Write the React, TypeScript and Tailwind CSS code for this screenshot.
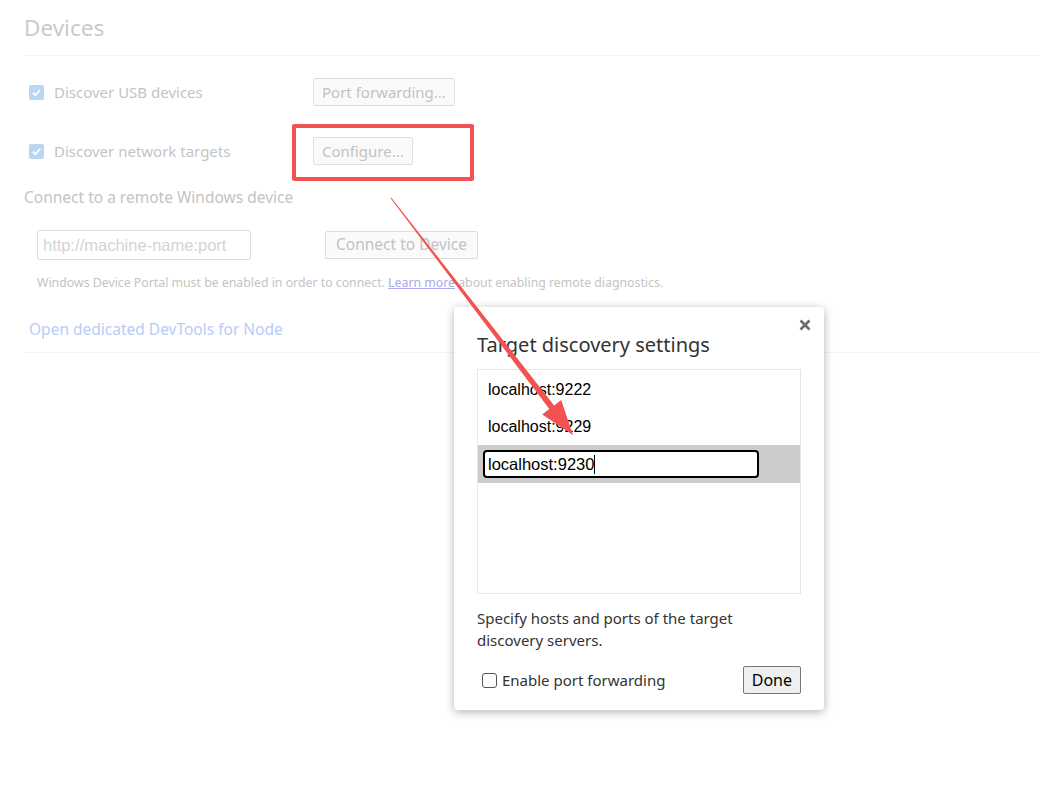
import React from "react";

const ui = { fontFamily: '"Noto Sans", "Open Sans", sans-serif' };
const arial = { fontFamily: '"Liberation Sans", Arial, sans-serif' };

const FadedCheck = () => (
  <span className="w-[15px] h-[15px] rounded-[2px] bg-[#b9d6f2] flex items-center justify-center">
    <svg width="11" height="11" viewBox="0 0 12 12">
      <path d="M2 6.2 L4.8 9 L10 3" stroke="#ffffff" strokeWidth="2" fill="none" />
    </svg>
  </span>
);

const FadedButton = ({ children, wide }: { children: React.ReactNode; wide?: boolean }) => (
  <button
    className={
      wide
        ? "h-[28px] px-[10px] border border-[#dedede] rounded-[2px] bg-[#fafafa] text-[#c2c2c2] text-[15.5px] leading-none"
        : "h-[28px] px-[8px] border border-[#dedede] rounded-[2px] bg-[#fafafa] text-[#c2c2c2] text-[15px] leading-none"
    }
  >
    {children}
  </button>
);

const App = () => {
  return (
    <div className="relative w-[1040px] h-[786px] bg-white overflow-hidden" style={ui}>
      {/* background page (dimmed) */}
      <div className="pl-[24px] pt-[13px]">
        <h1 className="text-[22.5px] leading-[30px] text-[#cacaca]">Devices</h1>
        <div className="mt-[12px] h-px bg-[#f4f4f4]" />

        <div className="flex items-center h-[28px] mt-[22px] pl-[5px]">
          <FadedCheck />
          <span className="ml-[10px] w-[259px] text-[15px] text-[#c4c4c4]">Discover USB devices</span>
          <FadedButton>Port forwarding...</FadedButton>
        </div>
        <div className="flex items-center h-[28px] mt-[31px] pl-[5px]">
          <FadedCheck />
          <span className="ml-[10px] w-[259px] text-[15px] text-[#c4c4c4]">Discover network targets</span>
          <FadedButton>Configure...</FadedButton>
        </div>

        <div className="mt-[22px] text-[15.5px] leading-[20px] text-[#c4c4c4]">Connect to a remote Windows device</div>

        <div className="flex items-center mt-[23px] pl-[13px]">
          <div
            className="w-[214px] h-[30px] border border-[#dcdcdc] rounded-[2px] flex items-center px-[5px] text-[16.5px] text-[#d4d4d4]"
            style={arial}
          >
            http://machine-name:port
          </div>
          <div className="ml-[74px]">
            <FadedButton wide>Connect to Device</FadedButton>
          </div>
        </div>

        <div className="mt-[15px] pl-[13px] text-[12.3px] leading-[16px] text-[#c4c4c4]">
          Windows Device Portal must be enabled in order to connect.{" "}
          <span className="underline text-[#a9a9f4]">Learn more</span> about enabling remote diagnostics.
        </div>

        <div className="mt-[28px] pl-[5px] text-[15.5px] leading-[20px] text-[#b7cdf4]">Open dedicated DevTools for Node</div>
        <div className="mt-[13px] h-px bg-[#f4f4f4]" />
      </div>

      {/* dialog */}
      <div className="absolute left-[454px] top-[307px] w-[370px] h-[403px] bg-white rounded-[4px] shadow-[0_2px_10px_rgba(0,0,0,0.3)] px-[23px] pt-[23px]">
        <button className="absolute right-[13px] top-[12px]">
          <svg width="12" height="12" viewBox="0 0 12 12">
            <path d="M1.5 1.5 L10.5 10.5 M10.5 1.5 L1.5 10.5" stroke="#6b6b6b" strokeWidth="2.6" />
          </svg>
        </button>
        <h2 className="text-[20px] leading-[30px] text-[#333]">Target discovery settings</h2>
        <div className="mt-[9px] h-[225px] border border-[#e6e6e6] text-[16px] text-black" style={arial}>
          <div className="h-[38px] flex items-center pl-[10px] pt-[1px]">localhost:9222</div>
          <div className="h-[37px] flex items-center pl-[10px]">localhost:9229</div>
          <div className="h-[38px] bg-[#cccccc] flex items-center pl-[5px]">
            <div className="w-[276px] h-[28px] bg-white border-2 border-black rounded-[4px] flex items-center pl-[3px] text-[16.5px]">
              localhost:9230<span className="inline-block w-px h-[19px] bg-black" />
            </div>
          </div>
        </div>
        <p className="mt-[13px] text-[15px] leading-[22px] text-[#333]">
          Specify hosts and ports of the target
          <br />
          discovery servers.
        </p>
        <div className="mt-[15px] flex items-center justify-between">
          <label className="flex items-center pl-[5px] text-[15px] text-[#333]">
            <span className="w-[15px] h-[15px] border border-[#555] rounded-[3px] bg-white" />
            <span className="ml-[5px]">Enable port forwarding</span>
          </label>
          <button className="h-[28px] px-[8px] border border-[#777] rounded-[2px] bg-[#efefef] text-[16px] text-black leading-none">
            Done
          </button>
        </div>
      </div>

      {/* annotations */}
      <div className="absolute left-[292px] top-[124px] w-[182px] h-[57px] border-[4px] border-[#f25252] rounded-[2px]" />
      <svg className="absolute inset-0 pointer-events-none" width="1040" height="786">
        <polygon
          points="391.4,197.7 554.1,405.4 561.2,399.9 573,435 542.2,414.5 549.3,409 390.6,198.3"
          fill="#f25252"
        />
      </svg>
    </div>
  );
};

export default App;
